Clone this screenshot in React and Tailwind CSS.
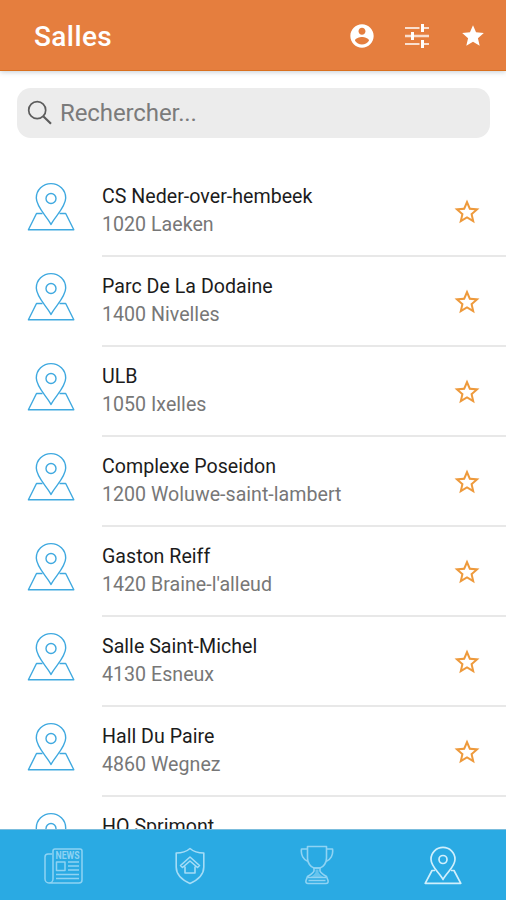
const halls = [
  ['CS Neder-over-hembeek', '1020 Laeken'],
  ['Parc De La Dodaine', '1400 Nivelles'],
  ['ULB', '1050 Ixelles'],
  ['Complexe Poseidon', '1200 Woluwe-saint-lambert'],
  ['Gaston Reiff', "1420 Braine-l'alleud"],
  ['Salle Saint-Michel', '4130 Esneux'],
  ['Hall Du Paire', '4860 Wegnez'],
  ['HO Sprimont', ''],
];

function Header() {
  return (
    <header className="relative z-10 flex h-[71px] shrink-0 items-center border-b border-[#d9701f] bg-[#e57e3e] pt-[2px] pl-[34px] pr-[20px] text-white shadow-[0_1px_5px_rgba(60,90,110,0.3)]">
      <h1 className="grow pt-px text-[28px] font-medium leading-8 tracking-[0.4px]">Salles</h1>
      <svg viewBox="0 0 24 24" className="mr-[28px] size-7" fill="currentColor">
        <path d="M12 2C6.48 2 2 6.48 2 12s4.48 10 10 10 10-4.48 10-10S17.52 2 12 2zm0 3c1.66 0 3 1.34 3 3s-1.34 3-3 3-3-1.34-3-3 1.34-3 3-3zm0 14.2c-2.5 0-4.71-1.28-6-3.22.03-1.99 4-3.08 6-3.08 1.99 0 5.97 1.09 6 3.08-1.29 1.94-3.5 3.22-6 3.22z" />
      </svg>
      <svg viewBox="0 0 26 26" className="mr-[30px] size-[26px]" fill="none" stroke="currentColor">
        <path d="M1 5h14.500M18 5h7M1 21h14.500M18 21h7" strokeWidth="1.500" />
        <path d="M1 13h6M9 13h16" strokeWidth="2.400" strokeOpacity="0.75" />
        <path d="M18.500 1v8M8.500 9v8M18.500 17v8" strokeWidth="3" />
      </svg>
      <svg viewBox="0 0 24 24" className="size-[26px]" fill="currentColor">
        <path d="M12 17.27 18.18 21l-1.64-7.03L22 9.24l-7.19-.61L12 2 9.19 8.63 2 9.24l5.46 4.73L5.82 21z" />
      </svg>
    </header>
  );
}

function SearchBar() {
  return (
    <div className="mr-[16px] ml-[17px] mt-[17px] flex h-[50px] shrink-0 items-center rounded-[14px] bg-[#ececec] pl-[10px] pr-4">
      <svg viewBox="0 0 26 26" className="mr-[7px] size-[26px]" fill="none" stroke="#5c5c5c" strokeWidth="1.7">
        <circle cx="10.200" cy="10.200" r="8.500" />
        <path d="m16.500 16.500 7.500 7.300" strokeWidth="2.200" />
      </svg>
      <input placeholder="Rechercher..." className="min-w-0 grow bg-transparent text-[24px] leading-8 tracking-[-0.1px] outline-none placeholder:text-[#7b7b7b]" />
    </div>
  );
}

function HallRow({ name, place }) {
  return (
    <li className="flex h-[90px] shrink-0 pl-[27px]">
      <svg viewBox="0 0 48 50" className="mt-[15px] mr-[27px] h-[50px] w-[48px] shrink-0" fill="none" stroke="#3fa9e0" strokeWidth="1.4" strokeLinejoin="round">
        <path d="M24 42.500C20 34.500 9.300 25 9.300 16a14.700 14.400 0 0 1 29.400 0C38.700 25 28 34.500 24 42.500Z" />
        <circle cx="24" cy="16.500" r="5" />
        <path d="M15.500 31.500H9.500L1.400 47.800h45.400L38.700 31.500h-6.200" />
      </svg>
      <div className="flex grow justify-between border-b-2 border-[#e8e8e8] pr-[24px]">
        <div className="pt-[16px] text-[19.6px] leading-[28px] tracking-[0.02px]">
          <p className="text-[#1c1c1c]">{name}</p>
          {place && <p className="text-[#777]">{place}</p>}
        </div>
        <svg viewBox="0 0 24 24" className="mt-[30px] size-[30px] shrink-0" fill="#ee9a3c">
          <path d="m22 9.24-7.19-.62L12 2 9.19 8.63 2 9.24l5.46 4.73L5.82 21 12 17.27 18.18 21l-1.63-7.03L22 9.24zM12 15.4l-3.76 2.27 1-4.28-3.32-2.88 4.38-.38L12 6.1l1.71 4.04 4.38.38-3.32 2.88 1 4.28L12 15.4z" />
        </svg>
      </div>
    </li>
  );
}

function TabBar() {
  return (
    <nav className="grid h-[71px] shrink-0 grid-cols-4 place-items-center border-t border-[#7bbddd] bg-[#2aaae3] pt-[2px] text-[#8fd3f3]">
      <svg viewBox="0 0 40 38" className="h-[38px] w-[40px]" fill="none" stroke="currentColor" strokeWidth="1.5" strokeLinejoin="round">
        <path d="M9 7H5a3 3 0 0 0-3 3v22a4 4 0 0 0 8 0V4a2 2 0 0 1 2-2h25a2 2 0 0 1 2 2v29a3 3 0 0 1-3 3H6" />
        <rect x="13.5" y="15" width="8.5" height="8.5" />
        <path d="M25 15h11M25 19h11M25 23h11M13 27.5h23M13 31.5h23" />
        <text x="12.500" y="11.500" fontSize="10" fontWeight="700" textLength="24" lengthAdjust="spacingAndGlyphs" fill="currentColor" stroke="none">NEWS</text>
      </svg>
      <svg viewBox="0 0 30 38" className="ml-px h-[38px] w-[30px] text-[#a5dcf6]" fill="none" stroke="currentColor" strokeWidth="1.6" strokeLinejoin="round">
        <path d="M15 1.5C11 5 6 6 1.2 6v14c0 8 6 13 13.8 16.5C22.8 33 28.8 28 28.8 20V6C24 6 19 5 15 1.5Z" />
        <path d="m15 10 9.500 8.500-2 2L15 14l-7.500 6.500-2-2L15 10ZM10 19.500V26h10v-6.500" />
      </svg>
      <svg viewBox="0 0 34 40" className="mb-[3px] ml-px h-10 w-[34px]" fill="none" stroke="currentColor" strokeWidth="1.6" strokeLinejoin="round">
        <path d="M7.500 1.500h19V13c0 5-3 9-6.500 10h-6c-3.500-1-6.500-5-6.500-10V1.500ZM7.500 4H1.500c-1 6 2 11 6.500 12.500M26.500 4h6c1 6-2 11-6.500 12.500" />
        <path d="M14 23h6v3c1 2.500 4 4 6.500 5.500l1.500 4c.5 2-.5 3-2 3H8c-1.500 0-2.500-1-2-3l1.500-4C10 30 13 28.500 14 26v-3Z" />
        <path d="M15.500 24.500h3v3c1 2 3 3 5 4.500h-13c2-1.500 4-2.500 5-4.500v-3Z" fill="currentColor" fillOpacity="0.6" stroke="none" />
        <path d="M8 32.500h18M8.500 35.500h17" strokeWidth="1.300" />
      </svg>
      <svg viewBox="0 0 38 39" className="mb-[2px] h-[39px] w-[38px]" fill="none" stroke="#d0effc" strokeWidth="1.700" strokeLinejoin="round">
        <path d="M19 33.500C16 27 7 21 7 13.200a12 11.800 0 0 1 24 0C31 21 22 27 19 33.500Z" />
        <circle cx="19" cy="13.500" r="4" />
        <path d="M11 24.500H8L1.200 37.300h35.600L30 24.500h-3" />
      </svg>
    </nav>
  );
}

export default function App() {
  return (
    <div className="flex h-screen w-full flex-col overflow-hidden bg-white font-[Roboto,sans-serif]">
      <Header />
      <SearchBar />
      <ul className="mt-[29px] flex min-h-0 grow flex-col overflow-hidden">
        {halls.map(([name, place]) => (
          <HallRow key={name} name={name} place={place} />
        ))}
      </ul>
      <TabBar />
    </div>
  );
}
